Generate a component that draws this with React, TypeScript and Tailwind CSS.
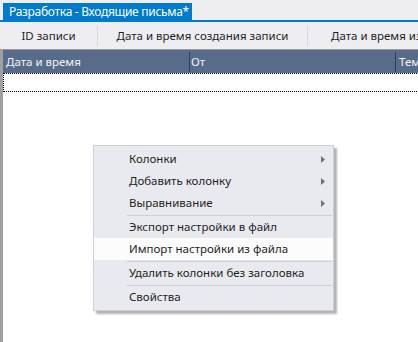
import React from 'react';

const font = { fontFamily: '"Segoe UI", "Noto Sans", "Open Sans", sans-serif' };

function Arrow() {
  return (
    <svg width="4" height="7" viewBox="0 0 4 7" className="fill-[#717171]">
      <path d="M0 0 L4 3.5 L0 7 Z" />
    </svg>
  );
}

function MenuItem({ label, sub, active }: { label: string; sub?: boolean; active?: boolean }) {
  return (
    <div className={`flex items-center h-[22px] pl-[35px] pr-[8px] whitespace-nowrap ${active ? 'bg-[#fcfcfc]' : ''}`}>
      <span className="flex-1">{label}</span>
      {sub && <Arrow />}
    </div>
  );
}

function Sep() {
  return <div className="ml-[33px] mr-px mt-px h-px bg-[#cccedb]" />;
}

export default function App() {
  return (
    <div className="w-[418px] h-[342px] bg-white text-[11.5px] text-[#1e1e1e] relative overflow-hidden" style={font}>
      <div className="bg-[#eeeef2] pt-[3px] pl-[3px] border-b-2 border-[#007acc] flex">
        <div className="bg-[#007acc] text-white h-[17px] leading-[17px] w-[189px] pl-[6px] whitespace-nowrap text-[12px] tracking-[-0.3px]">
          Разработка - Входящие письма*
        </div>
      </div>
      <div className="bg-[#eeeef2] h-[27px] flex items-center whitespace-nowrap">
        <div className="w-[97px] shrink-0 text-center">ID записи</div>
        <div className="w-px shrink-0 h-[20px] bg-[#d6d6dc]" />
        <div className="w-[209px] shrink-0 text-center">Дата и время создания записи</div>
        <div className="w-px shrink-0 h-[20px] bg-[#d6d6dc]" />
        <div className="pl-[23px] shrink-0">Дата и время изменения</div>
      </div>
      <div className="flex border-l-[3px] border-[#a0a0a0] h-[293px]">
        <div className="flex-1 flex flex-col">
          <div className="h-[24px] bg-[#586b8b] border-t border-[#9a9a9a] flex items-center text-[#f4f4f4] whitespace-nowrap">
            <div className="w-[186px] shrink-0 pl-[3px]">Дата и время</div>
            <div className="w-px shrink-0 h-[20px] bg-[#2f3d55]" />
            <div className="w-[205px] shrink-0 pl-[1px]">От</div>
            <div className="w-px shrink-0 h-[20px] bg-[#2f3d55]" />
            <div className="pl-[3px] shrink-0">Тема</div>
          </div>
          <div className="h-[19px] border-y border-dotted border-black border-l" />
        </div>
      </div>
      <div className="absolute left-[93px] top-[145px] w-[241px] bg-[#e9eaef] border border-[#cccedb] py-[2px] shadow-[3px_3px_2px_rgba(0,0,0,0.3)]">
        <MenuItem label="Колонки" sub />
        <MenuItem label="Добавить колонку" sub />
        <MenuItem label="Выравнивание" sub />
        <Sep />
        <MenuItem label="Экспорт настройки в файл" />
        <MenuItem label="Импорт настройки из файла" active />
        <Sep />
        <MenuItem label="Удалить колонки без заголовка" />
        <Sep />
        <MenuItem label="Свойства" />
      </div>
    </div>
  );
}
